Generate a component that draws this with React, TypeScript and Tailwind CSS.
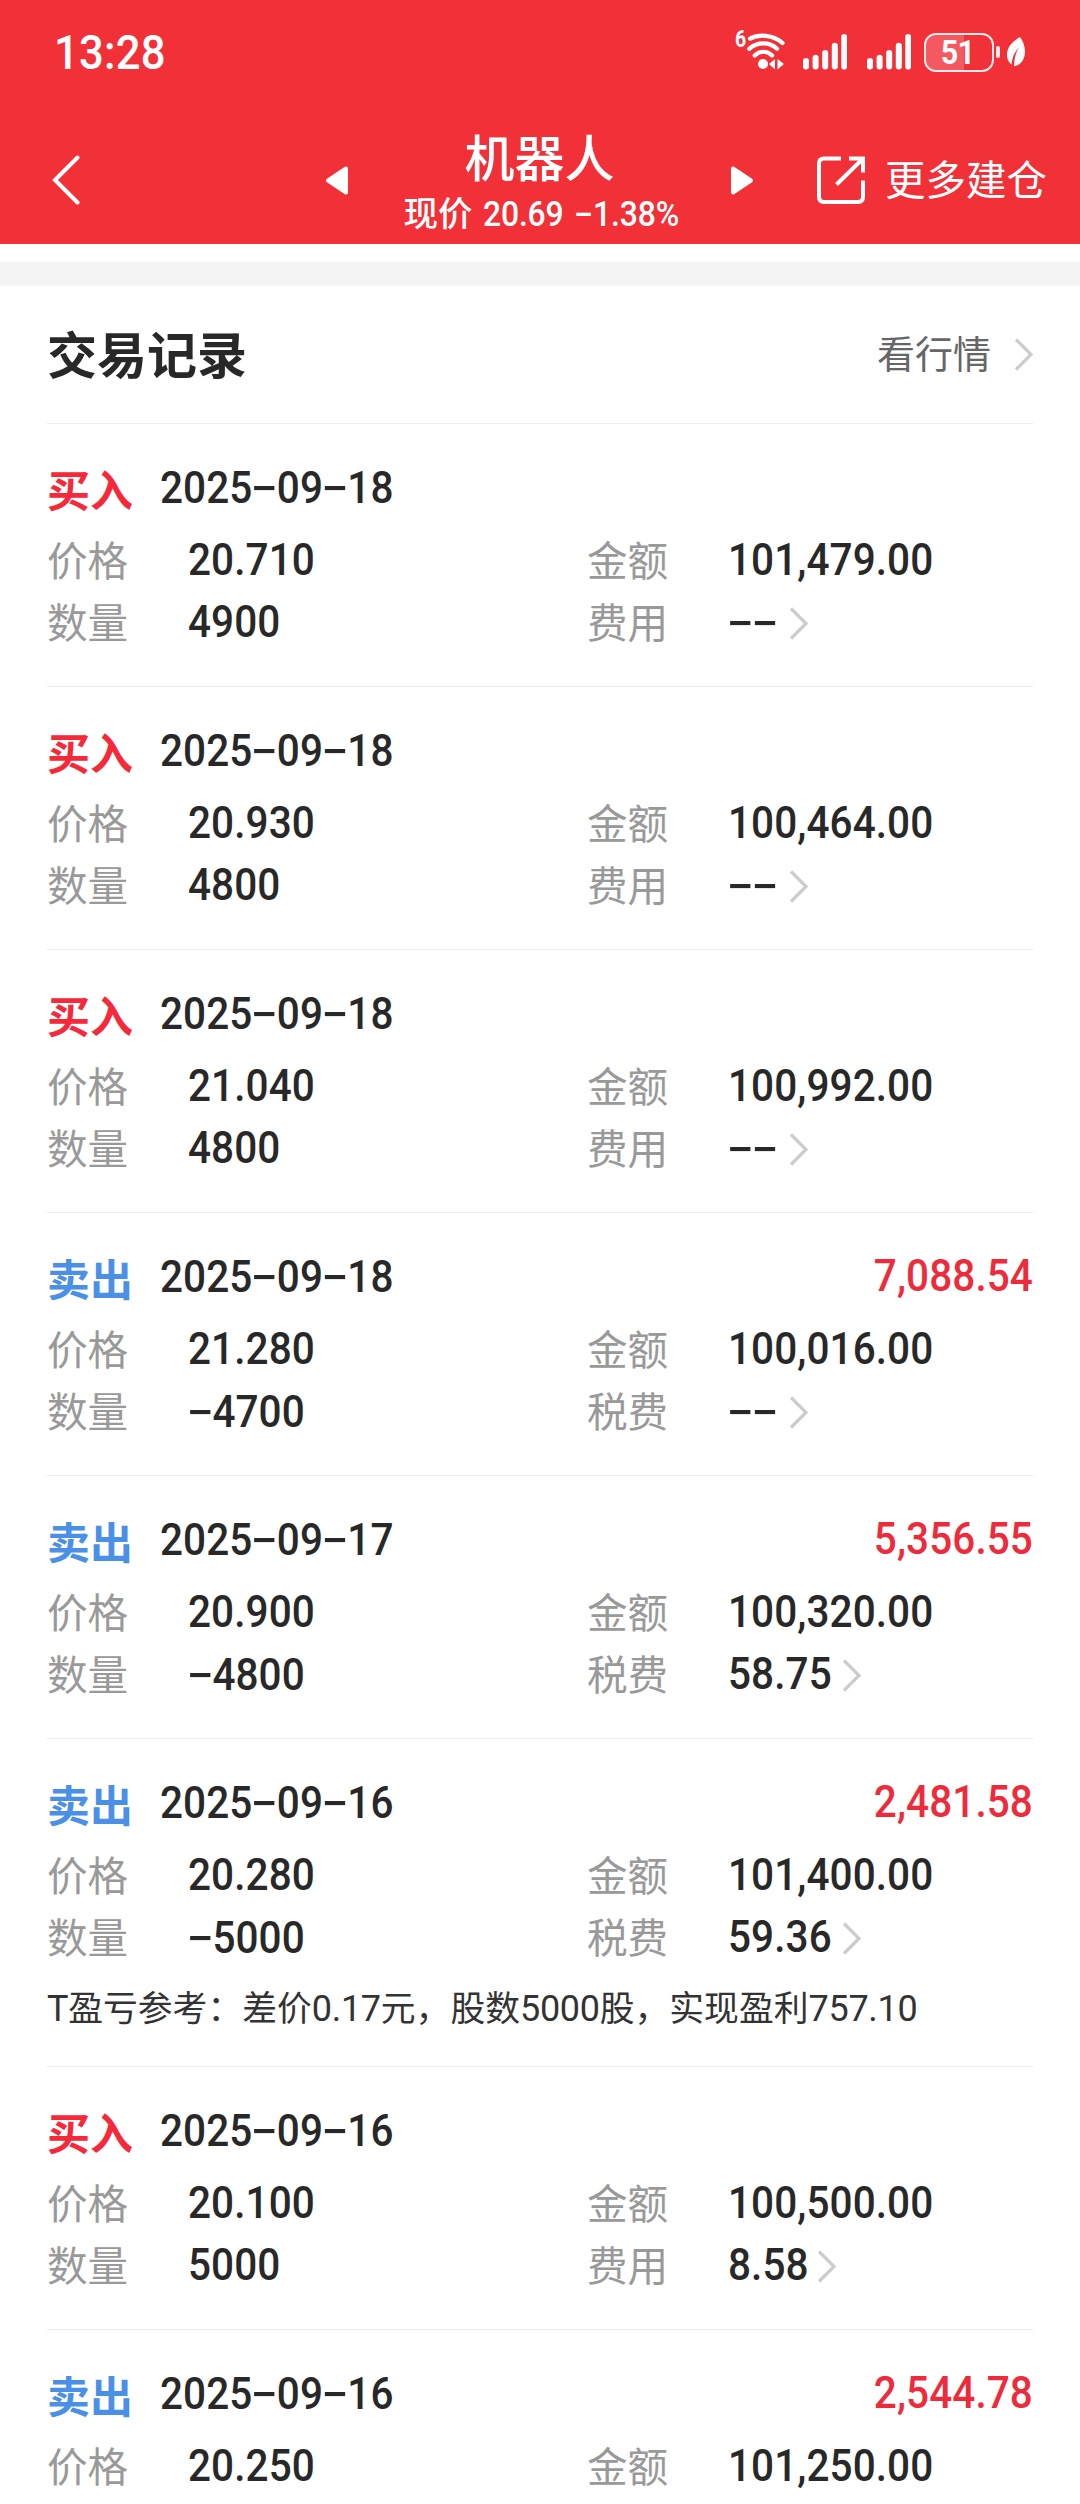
import { Fragment } from "react";

type Trade = {
  side: "买入" | "卖出";
  date: string;
  profit?: string;
  price: string;
  amount: string;
  quantity: string;
  fee: string;
  note?: [string, string][];
};

const trades: Trade[] = [
  { side: "买入", date: "2025-09-18", price: "20.710", amount: "101,479.00", quantity: "4900", fee: "--" },
  { side: "买入", date: "2025-09-18", price: "20.930", amount: "100,464.00", quantity: "4800", fee: "--" },
  { side: "买入", date: "2025-09-18", price: "21.040", amount: "100,992.00", quantity: "4800", fee: "--" },
  { side: "卖出", date: "2025-09-18", profit: "7,088.54", price: "21.280", amount: "100,016.00", quantity: "-4700", fee: "--" },
  { side: "卖出", date: "2025-09-17", profit: "5,356.55", price: "20.900", amount: "100,320.00", quantity: "-4800", fee: "58.75" },
  {
    side: "卖出",
    date: "2025-09-16",
    profit: "2,481.58",
    price: "20.280",
    amount: "101,400.00",
    quantity: "-5000",
    fee: "59.36",
    note: [
      ["T", "盈亏参考：差价"],
      ["0.17", "元，股数"],
      ["5000", "股，实现盈利"],
      ["757.10", ""],
    ],
  },
  { side: "买入", date: "2025-09-16", price: "20.100", amount: "100,500.00", quantity: "5000", fee: "8.58" },
  { side: "卖出", date: "2025-09-16", profit: "2,544.78", price: "20.250", amount: "101,250.00", quantity: "", fee: "" },
];

/** Condensed digits with wide dashes, as in a DIN-style numeral face. */
function Num({ children, right }: { children: string; right?: boolean }) {
  return (
    <span
      className={`mt-[-2px] inline-block scale-x-[0.92] font-['Roboto'] text-[44px] leading-[44px] font-medium tracking-[0.1px] whitespace-nowrap ${
        right ? "origin-right" : "origin-left"
      }`}
    >
      {children.split("-").map((part, i) => (
        <Fragment key={i}>
          {i > 0 && (
            <span className="relative top-[-1px] inline-block w-[26.5px] origin-center scale-x-[1.55] text-center font-['Inter'] tracking-normal">
              -
            </span>
          )}
          {part}
        </Fragment>
      ))}
    </span>
  );
}

function Chevron() {
  return (
    <svg width="20" height="33" viewBox="0 0 20 33" fill="none" stroke="#cccccc" strokeWidth="3.2">
      <path d="M2 1.5 17 16.5 2 31.5" />
    </svg>
  );
}

function Field({ label, value, arrow }: { label: string; value: string; arrow?: boolean }) {
  return (
    <div className="flex h-[62px] items-center">
      <span className="mt-[-4px] w-[141px] text-[40.6px] leading-[62px] text-[#999999]">{label}</span>
      <Num>{value}</Num>
      {arrow && (
        <span className={value === "--" ? "ml-[8px]" : "ml-px"}>
          <Chevron />
        </span>
      )}
    </div>
  );
}

function Record({ t }: { t: Trade }) {
  const buy = t.side === "买入";
  return (
    <section className={`mx-[47px] border-t border-[#ececec] pt-[34px] ${t.note ? "h-[328px]" : "h-[263px]"}`}>
      <div className="flex h-[60px] items-center">
        <span className={`mt-[-1px] w-[113px] text-[43px] leading-[60px] font-bold ${buy ? "text-[#f5293a]" : "text-[#4a90e6]"}`}>
          {t.side}
        </span>
        <Num>{t.date}</Num>
        {t.profit && (
          <span className="ml-auto text-[#ee2b3b]">
            <Num right>{t.profit}</Num>
          </span>
        )}
      </div>
      <div className="mt-[12px] grid grid-cols-[540px_1fr]">
        <Field label="价格" value={t.price} />
        <Field label="金额" value={t.amount} />
        {t.quantity && <Field label="数量" value={t.quantity} />}
        {t.fee && <Field label={buy ? "费用" : "税费"} value={t.fee} arrow />}
      </div>
      {t.note && (
        <p className="mt-[12px] text-[34.8px] leading-[50px] whitespace-nowrap text-[#333333]">
          {t.note.map(([latin, han], i) => (
            <Fragment key={i}>
              <span className="font-['Roboto'] text-[36px] tracking-[-0.3px]">{latin}</span>
              {han}
            </Fragment>
          ))}
        </p>
      )}
    </section>
  );
}

function Signal() {
  return (
    <svg width="44" height="36" viewBox="0 0 44 36" fill="#fff">
      <rect x="0" y="24" width="6" height="11.5" rx="3" />
      <rect x="9.6" y="20.7" width="6" height="14.8" rx="3" />
      <rect x="19.2" y="16" width="6" height="19.5" rx="3" />
      <rect x="28.8" y="8.7" width="6" height="26.8" rx="3" />
      <rect x="38.3" y="0" width="5.7" height="35.5" rx="2.8" />
    </svg>
  );
}

function StatusBar() {
  return (
    <div className="flex h-[104px] items-center pr-[55px] pl-[54px]">
      <span className="mt-[2px] inline-block origin-left scale-x-[0.91] font-['Roboto'] text-[48px] leading-[48px] font-medium tracking-[0.2px]">
        13:28
      </span>
      <div className="ml-auto flex items-center">
        <span className="mt-[-24px] w-[11px] origin-left scale-x-[0.85] font-['Roboto'] text-[23px] leading-[22px] font-bold">6</span>
        <svg width="40" height="38" viewBox="0 0 40 38" fill="none" stroke="#fff" strokeLinecap="round" strokeWidth="4.2">
          <path d="M4 5.600C13 .8 27 1.500 36.500 10" />
          <path d="M3.200 15.800C11.500 8.600 23.500 8.600 31 15.800" />
          <path d="M8.700 22.500c5-5 12.400-5 17.400 0" />
          <circle cx="17" cy="31" r="5" fill="#fff" stroke="none" />
          <path d="M23 31 29 26v10.500zM38 31 31.500 26v10.500z" fill="#fff" stroke="none" />
        </svg>
        <span className="ml-[17px]">
          <Signal />
        </span>
        <span className="ml-[20px]">
          <Signal />
        </span>
        <div className="relative ml-[13px] flex h-[39px] w-[70px] items-center justify-center overflow-hidden rounded-[12px] border-[2.5px] border-white/90">
          <div className="absolute inset-y-0 left-0 w-[38px] bg-white/20" />
          <span className="relative ml-[-2px] scale-x-[0.9] font-['Roboto'] text-[34px] leading-[34px] font-bold tracking-[-1px]">51</span>
        </div>
        <div className="ml-[2px] h-[12px] w-[4px] rounded-full bg-white/90" />
        <svg className="ml-[7px]" width="18" height="30" viewBox="0 0 18 30">
          <path d="M13 0C5 5 0 10 0 18c0 4 1.500 7.500 4.500 9.500C5 21 7.500 15 12 10.500 8.500 16 7 22 7.200 29.300 13.500 28.500 18 22 18 15 18 9 16 4 13 0z" fill="#fff" />
        </svg>
      </div>
    </div>
  );
}

function Header() {
  return (
    <header className="h-[244px] bg-[#f23037] text-white">
      <StatusBar />
      <div className="flex h-[140px] pl-[50px]">
        <svg className="mt-[51px] shrink-0" width="32" height="50" viewBox="0 0 32 50" fill="none" stroke="#fff" strokeWidth="4">
          <path d="M27.500 2.500 5 25 27.500 47.500" strokeLinecap="round" />
        </svg>
        <svg className="mt-[61px] ml-[243px] shrink-0" width="24" height="31" viewBox="0 0 24 31" fill="#fff" stroke="#fff" strokeWidth="4" strokeLinejoin="round">
          <path d="M3 15.500 21 3.500V27.500z" />
        </svg>
        <div className="w-[381px] shrink-0 text-center">
          <h1 className="mt-[19px] h-[64px] text-[50px] leading-[64px] font-medium">机器人</h1>
          <p className="mt-px h-[46px] pl-[19px] text-[34.5px] leading-[46px] font-medium whitespace-nowrap">
            现价
            <span className="ml-[10px] inline-block origin-left scale-x-[0.925] font-['Roboto'] tracking-[-0.2px]">
              20.69
              <span className="relative top-[-1px] ml-[11px] inline-block w-[21px] scale-x-[1.4] text-center font-['Inter']">-</span>
              1.38%
            </span>
          </p>
        </div>
        <svg className="mt-[61px] shrink-0" width="24" height="31" viewBox="0 0 24 31" fill="#fff" stroke="#fff" strokeWidth="4" strokeLinejoin="round">
          <path d="M21 15.500 3 3.500V27.500z" />
        </svg>
        <svg className="mt-[51px] ml-[61px] shrink-0" width="51" height="51" viewBox="0 0 51 51" fill="none" stroke="#fff" strokeWidth="4">
          <path d="M26 3.500H9Q4 3.500 4 8.500V41.500Q4 47 9 47H43Q48 47 48 42V25.500" />
          <path d="M34 3.500H48V17.500M47 4.500 21.500 29.500" />
        </svg>
        <span className="mt-[44px] ml-[19px] text-[40.5px] leading-[60px] whitespace-nowrap">更多建仓</span>
      </div>
    </header>
  );
}

export default function App() {
  return (
    <div className="h-[2504px] w-[1080px] overflow-hidden bg-white font-['Noto_Sans_CJK_SC',sans-serif] text-[#282828]">
      <Header />
      <div className="mt-[18px] h-[24px] bg-[#f4f4f4]" />
      <div className="flex h-[137px] items-center justify-between pr-[46px] pl-[47px]">
        <h2 className="mt-[-6px] text-[50px] leading-[60px] font-bold">交易记录</h2>
        <div className="flex items-center gap-[23px] text-[38px] leading-[60px] text-[#666666]">
          <span className="mt-[-5px]">看行情</span>
          <Chevron />
        </div>
      </div>
      {trades.map((t, i) => (
        <Record key={i} t={t} />
      ))}
    </div>
  );
}
